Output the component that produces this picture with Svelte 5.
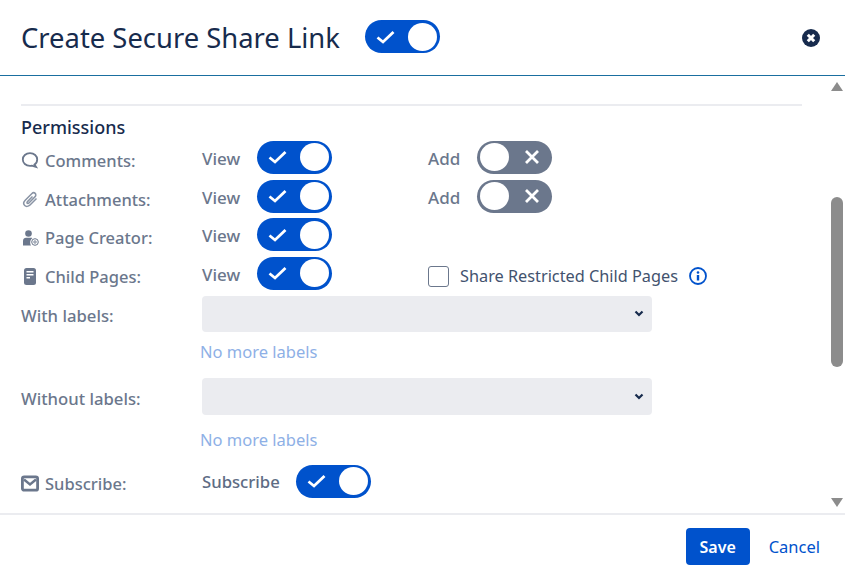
<script>
  const rows = [
    { icon: 'comment', label: 'Comments:', add: true },
    { icon: 'clip', label: 'Attachments:', add: true },
    { icon: 'creator', label: 'Page Creator:', add: false },
    { icon: 'page', label: 'Child Pages:', add: false, restricted: true }
  ];
</script>

{#snippet toggle(on)}
  <span class="toggle" class:on>
    {#if on}
      <svg class="mark" width="19" height="14" viewBox="0 0 19 14"><path d="M1.500 7.500 L7 12 L17.500 2" fill="none" stroke="#fff" stroke-width="2.800"/></svg>
    {:else}
      <svg class="mark" width="14" height="14" viewBox="0 0 14 14"><path d="M1 1 L13 13 M13 1 L1 13" fill="none" stroke="#fff" stroke-width="2.800"/></svg>
    {/if}
    <span class="knob"></span>
  </span>
{/snippet}

{#snippet icon(name)}
  <svg class="icon" width="18" height="18" viewBox="0 0 18 18">
    {#if name === 'comment'}
      <path d="M9 2.200c4.200 0 7.200 2.700 7.200 6.300 0 2.200-1 4-2.700 5.100l1.500 2.300-4.200-1.300c-.6.1-1.200.2-1.800.2-4.200 0-7.200-2.700-7.200-6.300S4.800 2.200 9 2.200z" fill="none" stroke="#6b778c" stroke-width="1.800"/>
    {:else if name === 'clip'}
      <path d="M15.500 8.500 9 15c-1.700 1.700-4 1.800-5.300.5-1.300-1.300-1.200-3.600.5-5.300l6.500-6.500c1.100-1.100 2.600-1.200 3.500-.3.900.9.800 2.400-.3 3.500l-6 6.100c-.6.600-1.300.7-1.700.3-.4-.4-.3-1.100.3-1.700l5-5.100" fill="none" stroke="#8993a4" stroke-width="1.500"/>
    {:else if name === 'creator'}
      <circle cx="7.500" cy="4.500" r="3.300" fill="#6b778c"/>
      <path d="M2 16.500v-4.500c0-2 1.500-3.200 3-3.200h5c.6 0 1 .1 1.400.4-2 1.200-3 4.600-1.400 7.300z" fill="#6b778c"/>
      <circle cx="14" cy="13" r="3.300" fill="none" stroke="#6b778c" stroke-width="1"/>
      <circle cx="14" cy="13" r="1.200" fill="none" stroke="#6b778c" stroke-width=".9"/>
    {:else if name === 'page'}
      <rect x="3" y="1" width="12" height="17" rx="2.500" fill="#6b778c"/>
      <path d="M5.500 4.800h7M5.500 7.800h7M5.500 10.800h3.500" stroke="#fff" stroke-width="1.500"/>
    {:else}
      <rect x="1.400" y="2.800" width="15.200" height="13.400" rx="1.800" fill="none" stroke="#6b778c" stroke-width="2.800"/>
      <path d="M3 5.500l6 5 6-5" fill="none" stroke="#6b778c" stroke-width="2.400"/>
    {/if}
  </svg>
{/snippet}

<div class="dialog">
  <header>
    <h1>Create Secure Share Link</h1>
    {@render toggle(true)}
    <button class="close" aria-label="Close">
      <svg width="18" height="18" viewBox="0 0 18 18">
        <circle cx="9" cy="9" r="9" fill="#172b4d"/>
        <path d="M5.800 5.800 L12.200 12.200 M12.200 5.800 L5.800 12.200" stroke="#fff" stroke-width="3"/>
      </svg>
    </button>
  </header>

  <div class="middle">
    <main>
      <hr />
      <h2>Permissions</h2>
      {#each rows as row}
        <div class="row">
          <span class="label">{@render icon(row.icon)}{row.label}</span>
          <span class="opt">View</span>
          {@render toggle(true)}
          {#if row.add}
            <span class="opt add">Add</span>
            {@render toggle(false)}
          {/if}
          {#if row.restricted}
            <span class="restricted">
              <span class="box"></span>
              Share Restricted Child Pages
              <svg width="18" height="18" viewBox="0 0 18 18">
                <circle cx="9" cy="9" r="8" fill="none" stroke="#0052cc" stroke-width="1.800"/>
                <circle cx="9" cy="5.500" r="1.300" fill="#0052cc"/>
                <path d="M9 8v5.500" stroke="#0052cc" stroke-width="2.400"/>
              </svg>
            </span>
          {/if}
        </div>
      {/each}

      <div class="filter first">
        <span class="name">With labels:</span>
        <div class="select">
          <svg width="10" height="7" viewBox="0 0 10 7"><path d="M1.500 1.500 L5 5 L8.500 1.500" fill="none" stroke="#172b4d" stroke-width="2.200"/></svg>
        </div>
      </div>
      <p class="empty">No more labels</p>

      <div class="filter second">
        <span class="name">Without labels:</span>
        <div class="select">
          <svg width="10" height="7" viewBox="0 0 10 7"><path d="M1.500 1.500 L5 5 L8.500 1.500" fill="none" stroke="#172b4d" stroke-width="2.200"/></svg>
        </div>
      </div>
      <p class="empty">No more labels</p>

      <div class="row subscribe">
        <span class="label">{@render icon('mail')}Subscribe:</span>
        <span class="opt sub">Subscribe</span>
        {@render toggle(true)}
      </div>
    </main>

    <div class="scrollbar">
      <svg width="12" height="9" viewBox="0 0 12 9"><path d="M6 0 L12 9 H0 Z" fill="#8c8c8c"/></svg>
      <div class="track"><div class="thumb"></div></div>
      <svg width="12" height="9" viewBox="0 0 12 9"><path d="M0 0 H12 L6 9 Z" fill="#8c8c8c"/></svg>
    </div>
  </div>

  <footer>
    <button class="save">Save</button>
    <button class="cancel">Cancel</button>
  </footer>
</div>

<style>
  :global(body) {
    margin: 0;
    background: #fff;
  }

  .dialog {
    width: 845px;
    height: 567px;
    display: flex;
    flex-direction: column;
    overflow: hidden;
    font-family: "Noto Sans", "Open Sans", sans-serif;
    color: #172b4d;
  }

  header {
    flex: none;
    display: flex;
    align-items: center;
    padding: 0 25px 2px 21px;
    height: 73px;
    border-bottom: 1px solid #1a6fa0;
  }

  h1 {
    margin: 2px 25px 0 0;
    font-size: 27.400px;
    font-weight: 400;
  }

  .close {
    margin: 2px 0 0 auto;
    padding: 0;
    border: none;
    background: none;
    display: flex;
  }

  .middle {
    flex: 1;
    min-height: 0;
    display: flex;
  }

  main {
    flex: 1;
    padding: 28px 27px 0 21px;
    overflow: hidden;
  }

  hr {
    margin: 0;
    border: none;
    border-top: 2px solid #ebecf0;
  }

  h2 {
    margin: 10px 0 0;
    font-size: 18px;
    line-height: 22px;
    font-weight: 500;
  }

  .row {
    height: 38.700px;
    display: flex;
    align-items: center;
  }

  .label {
    width: 181px;
    flex: none;
    display: flex;
    align-items: center;
    gap: 6px;
    font-size: 16.500px;
    font-weight: 500;
    color: #6b778c;
    position: relative;
    top: 3px;
  }

  .opt {
    width: 55px;
    flex: none;
    font-size: 17px;
    font-weight: 500;
    color: #6b778c;
    position: relative;
    top: 1px;
  }

  .add {
    margin-left: 96px;
    width: 49px;
  }

  .sub {
    width: 94px;
    font-size: 16.700px;
    color: #5e6c84;
  }

  .toggle {
    width: 75px;
    height: 33px;
    flex: none;
    box-sizing: border-box;
    border-radius: 17px;
    background: #6b778c;
    display: flex;
    align-items: center;
    justify-content: space-between;
    padding: 0 3px;
  }

  .toggle .mark {
    order: 2;
    margin-right: 10px;
  }

  .toggle.on {
    background: #0052cc;
  }

  .toggle.on .mark {
    order: 0;
    margin: 0 0 0 8px;
  }

  .toggle.on .knob {
    order: 1;
  }

  .knob {
    width: 29px;
    height: 28px;
    border-radius: 50%;
    background: #fff;
  }

  .restricted {
    margin-left: 96px;
    display: flex;
    align-items: center;
    font-size: 16.300px;
    color: #42526e;
    position: relative;
    top: 3px;
  }

  .box {
    width: 21px;
    height: 21px;
    box-sizing: border-box;
    border: 1px solid #6b778c;
    border-radius: 3px;
    margin-right: 11px;
  }

  .restricted svg {
    margin-left: 11px;
  }

  .filter {
    display: flex;
    align-items: center;
  }

  .first {
    margin-top: 3px;
  }

  .second .select {
    height: 37px;
  }

  .name {
    width: 181px;
    flex: none;
    font-size: 16.700px;
    font-weight: 500;
    color: #6b778c;
    position: relative;
    top: 2px;
  }

  .select {
    width: 450px;
    height: 36px;
    border-radius: 4px;
    background: #ebecf0;
    display: flex;
    align-items: center;
    justify-content: flex-end;
    padding-right: 8px;
    box-sizing: border-box;
  }

  .empty {
    margin: 9px 0 15px 179px;
    font-size: 16.500px;
    line-height: 22px;
    color: #8eb0e6;
  }

  .second + .empty {
    margin-top: 14px;
  }

  .subscribe {
    margin-top: -4px;
  }

  .subscribe .label {
    top: 2px;
  }

  .subscribe .opt {
    top: 0;
  }

  .scrollbar {
    width: 16px;
    flex: none;
    display: flex;
    flex-direction: column;
    align-items: center;
    padding: 6px 0;
    box-sizing: border-box;
  }

  .track {
    flex: 1;
    width: 100%;
    display: flex;
    justify-content: center;
  }

  .thumb {
    width: 12px;
    height: 170px;
    margin-top: 106px;
    border-radius: 6px;
    background: #8c8c8c;
  }

  footer {
    height: 54px;
    flex: none;
    display: flex;
    align-items: flex-start;
    padding: 13px 25px 0 0;
    justify-content: flex-end;
    border-top: 2px solid #ebecf0;
    box-sizing: border-box;
  }

  .save {
    width: 64px;
    height: 37px;
    border: none;
    border-radius: 4px;
    background: #0052cc;
    color: #fff;
    font: 600 16px "Noto Sans", "Open Sans", sans-serif;
  }

  .cancel {
    margin-left: 19px;
    height: 37px;
    padding: 0;
    border: none;
    background: none;
    color: #0052cc;
    font: 400 16.500px "Noto Sans", "Open Sans", sans-serif;
  }
</style>
